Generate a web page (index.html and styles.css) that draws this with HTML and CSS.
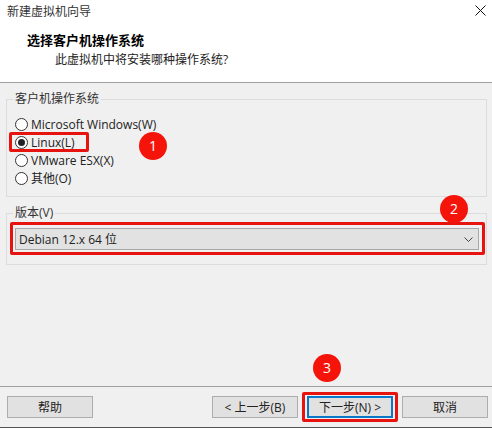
FILE: index.html
```html
<!DOCTYPE html>
<html lang="zh-CN">
<head>
  <meta charset="UTF-8" />
  <title>新建虚拟机向导</title>
  <link rel="stylesheet" href="styles.css">
</head>
<body>
  <div class="wizard">
    <header class="top">
      <div class="titlebar">
        <span class="title">新建虚拟机向导</span>
        <svg class="close" width="11" height="11" viewBox="0 0 11 11"><path d="M0.5 0.5L10.5 10.5M10.5 0.5L0.5 10.5" stroke="#111" stroke-width="1" fill="none"/></svg>
      </div>
      <h1>选择客户机操作系统</h1>
      <p class="sub">此虚拟机中将安装哪种操作系统?</p>
    </header>

    <main class="content">
      <fieldset class="group os-group">
        <legend>客户机操作系统</legend>
        <div class="radio"><span class="dot"></span>Microsoft Windows(W)</div>
        <div class="radio"><span class="dot checked"></span>Linux(L)</div>
        <div class="radio"><span class="dot"></span>VMware ESX(X)</div>
        <div class="radio"><span class="dot"></span>其他(O)</div>
      </fieldset>

      <fieldset class="group version-group">
        <legend>版本(V)</legend>
        <div class="select">
          <span>Debian 12.x 64 位</span>
          <svg width="9" height="5" viewBox="0 0 9 5"><path d="M0.5 0.5L4.5 4.5L8.5 0.5" stroke="#444" stroke-width="1" fill="none"/></svg>
        </div>
      </fieldset>
    </main>

    <footer class="actions">
      <button class="btn">帮助</button>
      <div class="nav">
        <button class="btn">&lt; 上一步(B)</button>
        <button class="btn primary">下一步(N) &gt;</button>
        <button class="btn">取消</button>
      </div>
    </footer>
  </div>

  <!-- red annotations on top of the screenshot -->
  <div class="mark mark-linux"></div>
  <div class="mark mark-select"></div>
  <div class="mark mark-next"></div>
  <div class="badge badge-1">1</div>
  <div class="badge badge-2">2</div>
  <div class="badge badge-3">3</div>
</body>
</html>
```

FILE: styles.css
```css
html, body {
  margin: 0;
  padding: 0;
}

body {
  width: 492px;
  height: 428px;
  overflow: hidden;
  position: relative;
  background: #f0f0f0;
  color: #222;
  font-family: "Open Sans", "Noto Sans CJK SC", sans-serif;
  font-size: 12px;
}

.wizard {
  height: 428px;
  box-sizing: border-box;
  display: flex;
  flex-direction: column;
  border-bottom: 1px solid #555;
}

.top {
  height: 83px;
  box-sizing: border-box;
  background: #fff;
  border-bottom: 1px solid #a0a0a0;
  flex: none;
}

.titlebar {
  height: 20px;
  padding: 1px 6px 0 7px;
  display: flex;
  justify-content: space-between;
  align-items: center;
  box-sizing: border-box;
}

.title {
  color: #333;
}

.close {
  margin-top: -1px;
}

h1 {
  margin: 12px 0 0 27px;
  font-size: 13px;
  line-height: 17px;
  font-weight: bold;
  color: #000;
}

.sub {
  margin: 2px 0 0 55px;
  line-height: 17px;
  color: #222;
}

.content {
  flex: 1;
  padding: 8px 5px 0 6px;
}

.group {
  margin: 0;
  padding: 0 7px 0 8px;
  border: 1px solid #dcdcdc;
  min-width: 0;
}

.group legend {
  margin-left: -2px;
  padding: 0 2px;
  line-height: 16px;
  color: #333;
}

.os-group {
  height: 106px;
  box-sizing: border-box;
  padding-top: 8px;
}

.radio {
  height: 18px;
  display: flex;
  align-items: center;
  gap: 3px;
}

.dot {
  width: 11px;
  height: 11px;
  border: 1px solid #333;
  border-radius: 50%;
  background: #fff;
  position: relative;
  flex: none;
}

.dot.checked::after {
  content: "";
  position: absolute;
  left: 2px;
  top: 2px;
  width: 7px;
  height: 7px;
  border-radius: 50%;
  background: #222;
}

.version-group {
  margin-top: 8px;
  height: 60px;
  box-sizing: border-box;
  padding-top: 7px;
}

.select {
  height: 22px;
  box-sizing: border-box;
  padding: 0 5px 0 3px;
  border: 1px solid #a8a8a8;
  background: #e1e2e1;
  display: flex;
  justify-content: space-between;
  align-items: center;
  color: #222;
}

.actions {
  flex: none;
  height: 41px;
  box-sizing: border-box;
  border-top: 1px solid #a0a0a0;
  padding: 9px 4px 0 7px;
  display: flex;
  justify-content: space-between;
  align-items: flex-start;
}

.nav {
  display: flex;
  gap: 9px;
}

.btn {
  width: 86px;
  height: 22px;
  box-sizing: border-box;
  padding: 0;
  border: 1px solid #adadad;
  background: #e1e1e1;
  color: #222;
  font: inherit;
}

.btn.primary {
  border: 2px solid #0a78c8;
}

.mark {
  position: absolute;
  border: 3px solid #e6130f;
  border-radius: 2px;
}

.mark-linux {
  left: 9px;
  top: 132px;
  width: 74px;
  height: 14px;
}

.mark-select {
  left: 10px;
  top: 222px;
  width: 469px;
  height: 27px;
}

.mark-next {
  left: 302px;
  top: 392px;
  width: 90px;
  height: 24px;
}

.badge {
  position: absolute;
  width: 28px;
  height: 28px;
  border-radius: 50%;
  background: #f5140a;
  color: #fff;
  font-size: 14px;
  line-height: 28px;
  text-align: center;
}

.badge-1 {
  left: 139px;
  top: 132px;
}

.badge-2 {
  left: 440px;
  top: 195px;
}

.badge-3 {
  left: 313px;
  top: 354px;
}
```
